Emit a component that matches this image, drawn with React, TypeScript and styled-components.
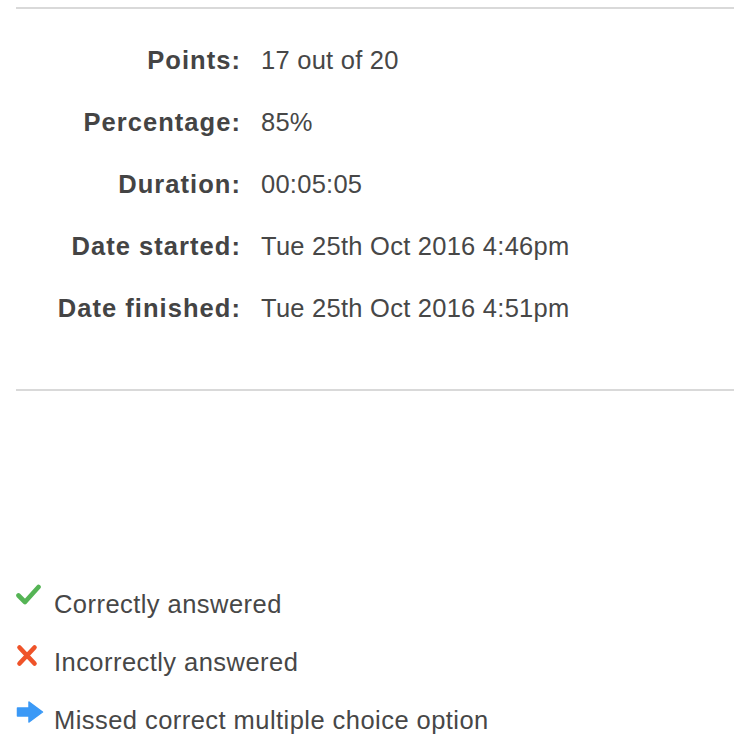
import React from "react";
import styled, { createGlobalStyle } from "styled-components";

const Global = createGlobalStyle`
  html, body { margin: 0; padding: 0; background: #ffffff; }
  body { font-family: "Liberation Sans", Arial, Helvetica, sans-serif; color: #444; }
`;

const Page = styled.div`
  padding: 7px 16px 0 16px;
`;

const Rule = styled.hr`
  border: 0;
  height: 2px;
  background: #d9d9d9;
  margin: 0;
`;

const Stats = styled.dl`
  display: grid;
  grid-template-columns: 224px 1fr;
  column-gap: 21px;
  margin: 20px 0 50px 0;
`;

const Label = styled.dt`
  font-weight: bold;
  text-align: right;
  font-size: 25.5px;
  letter-spacing: 1.05px;
  margin-right: -1px;
  line-height: 62px;
  color: #444;
`;

const Value = styled.dd`
  margin: 0;
  font-size: 25.5px;
  letter-spacing: 0.25px;
  line-height: 62px;
  color: #474747;
`;

const Legend = styled.ul`
  list-style: none;
  margin: 184px 0 0 0;
  padding: 0;
`;

const LegendItem = styled.li`
  display: flex;
  align-items: flex-start;
  height: 58px;
`;

const IconSlot = styled.span<{ $top: number }>`
  width: 38px;
  flex: none;
  display: flex;
  margin-top: ${(p) => p.$top}px;
`;

const LegendText = styled.span`
  font-size: 25.5px;
  letter-spacing: 0.45px;
  line-height: 58px;
  color: #474747;
`;

const Check = () => (
  <svg width="25" height="21" viewBox="0 0 25 21">
    <path d="M2.5 11.5 L9 18 L22.5 3" fill="none" stroke="#55b455" strokeWidth="4.6" strokeLinecap="round" strokeLinejoin="round" />
  </svg>
);

const Cross = () => (
  <svg width="22" height="23" viewBox="0 0 22 23">
    <path d="M3.5 3.5 L18.5 19.5 M18.5 3.5 L3.5 19.5" fill="none" stroke="#ef5329" strokeWidth="4.6" strokeLinecap="round" />
  </svg>
);

const Arrow = () => (
  <svg width="28" height="24" viewBox="0 0 28 24">
    <path d="M1.5 8 H13 V2 L26.5 12 L13 22 V16 H1.5 Z" fill="#3b99f6" stroke="#3b99f6" strokeWidth="1.5" strokeLinejoin="round" />
  </svg>
);

const stats: [string, string][] = [
  ["Points:", "17 out of 20"],
  ["Percentage:", "85%"],
  ["Duration:", "00:05:05"],
  ["Date started:", "Tue 25th Oct 2016 4:46pm"],
  ["Date finished:", "Tue 25th Oct 2016 4:51pm"],
];

export default function App() {
  return (
    <>
      <Global />
      <Page>
        <Rule />
        <Stats>
          {stats.map(([l, v]) => (
            <React.Fragment key={l}>
              <Label>{l}</Label>
              <Value>{v}</Value>
            </React.Fragment>
          ))}
        </Stats>
        <Rule />
        <Legend>
          <LegendItem>
            <IconSlot $top={9}><Check /></IconSlot>
            <LegendText>Correctly answered</LegendText>
          </LegendItem>
          <LegendItem>
            <IconSlot $top={11}><Cross /></IconSlot>
            <LegendText>Incorrectly answered</LegendText>
          </LegendItem>
          <LegendItem>
            <IconSlot $top={9}><Arrow /></IconSlot>
            <LegendText>Missed correct multiple choice option</LegendText>
          </LegendItem>
        </Legend>
      </Page>
    </>
  );
}
